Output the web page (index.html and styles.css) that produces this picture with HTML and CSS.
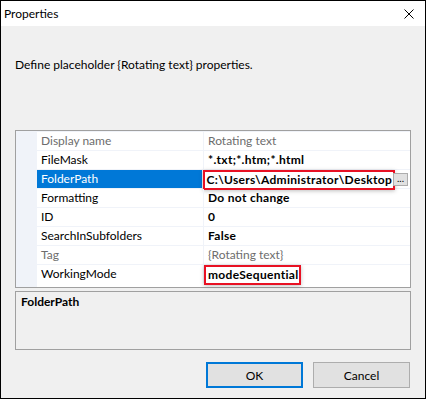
FILE: index.html
```html
<!DOCTYPE html>
<html lang="en">
<head>
  <meta charset="UTF-8" />
  <title>Properties</title>
  <link rel="stylesheet" href="styles.css">
</head>
<body>

  <div class="window">
    <!-- Title bar -->
    <div class="titlebar">
      <span class="title">Properties</span>
      <svg class="close" width="10" height="10" viewBox="0 0 10 10">
        <path d="M0.5 0.5 L9.5 9.5 M9.5 0.5 L0.5 9.5" stroke="#000" stroke-width="1" fill="none"/>
      </svg>
    </div>

    <div class="content">
      <p class="intro">Define placeholder {Rotating text} properties.</p>

      <!-- Property grid -->
      <div class="grid">
        <div class="row readonly">
          <div class="name">Display name</div>
          <div class="value">Rotating text</div>
        </div>
        <div class="row">
          <div class="name">FileMask</div>
          <div class="value changed">*.txt;*.htm;*.html</div>
        </div>
        <div class="row selected">
          <div class="name">FolderPath</div>
          <div class="value changed">
            <span class="mark">C:\Users\Administrator\Desktop</span>
            <span class="dots">...</span>
          </div>
        </div>
        <div class="row">
          <div class="name">Formatting</div>
          <div class="value changed">Do not change</div>
        </div>
        <div class="row">
          <div class="name">ID</div>
          <div class="value changed">0</div>
        </div>
        <div class="row">
          <div class="name">SearchInSubfolders</div>
          <div class="value changed">False</div>
        </div>
        <div class="row readonly">
          <div class="name">Tag</div>
          <div class="value">{Rotating text}</div>
        </div>
        <div class="row">
          <div class="name">WorkingMode</div>
          <div class="value changed"><span class="mark">modeSequential</span></div>
        </div>
      </div>

      <!-- Help panel -->
      <div class="help">
        <strong>FolderPath</strong>
      </div>

      <div class="actions">
        <button class="btn default">OK</button>
        <button class="btn">Cancel</button>
      </div>
    </div>
  </div>

</body>
</html>
```

FILE: styles.css
```css
:root {
  --window-bg: #f0f0f0;
  --grid-line: #f0f3f9;
  --border-gray: #a0a0a0;
  --highlight: #0078d7;
  --gray-text: #6d6d6d;
  --button-bg: #e1e1e1;
  --button-border: #adadad;
  --mark-red: #e81123;
}

* {
  box-sizing: border-box;
  margin: 0;
  padding: 0;
}

body {
  font-family: Lato, "Noto Sans", sans-serif;
  font-size: 12px;
  color: #000;
  background: #fff;
}

.window {
  width: 426px;
  height: 399px;
  border: 1px solid #000;
  background-color: var(--window-bg);
  display: flex;
  flex-direction: column;
}

.titlebar {
  height: 25px;
  background-color: #fff;
  display: flex;
  align-items: center;
  justify-content: space-between;
  padding: 0 11px 0 3px;
}

.close {
  display: block;
}

.content {
  padding: 0 14px;
  display: flex;
  flex-direction: column;
}

.intro {
  line-height: 16px;
  margin-top: 31px;
}

/* Property grid */
.grid {
  margin-top: 57px;
  height: 158px;
  border: 1px solid var(--border-gray);
  background: linear-gradient(to right, var(--grid-line) 21px, #fff 21px);
  padding-left: 21px;
}

.row {
  display: flex;
  height: 19px;
  border-top: 1px solid var(--grid-line);
  line-height: 18px;
  white-space: nowrap;
}

.name {
  width: 167px;
  padding-left: 4px;
  border-right: 1px solid var(--grid-line);
}

.value {
  flex: 1;
  padding-left: 4px;
  display: flex;
  align-items: center;
  justify-content: space-between;
}

.value.changed {
  font-weight: bold;
  letter-spacing: 0.3px;
}

.readonly .name,
.readonly .value {
  color: var(--gray-text);
}

.selected .name {
  background-color: var(--highlight);
  color: #fff;
}

.mark {
  display: inline-block;
  line-height: 16px;
  margin-left: -2px;
  margin-top: 2px;
  padding: 0 1px 0 2px;
  outline: 2px solid var(--mark-red);
  box-shadow: 0 1px 4px 2px rgba(0, 0, 0, 0.25);
}

.dots {
  width: 15px;
  height: 13px;
  margin-right: 2px;
  border: 1px solid var(--button-border);
  background-color: var(--button-bg);
  font-weight: normal;
  letter-spacing: 0;
  font-size: 10px;
  line-height: 8px;
  text-align: center;
}

/* Help panel */
.help {
  margin-top: 3px;
  height: 59px;
  border: 1px solid var(--border-gray);
  padding: 2px 5px;
  line-height: 16px;
}

.actions {
  margin-top: 12px;
  display: flex;
  justify-content: flex-end;
  gap: 10px;
  padding-right: 1px;
}

.btn {
  width: 97px;
  height: 26px;
  font-family: inherit;
  font-size: 12px;
  background-color: var(--button-bg);
  border: 1px solid var(--button-border);
  color: #000;
}

.btn.default {
  border: 2px solid var(--highlight);
}
```
